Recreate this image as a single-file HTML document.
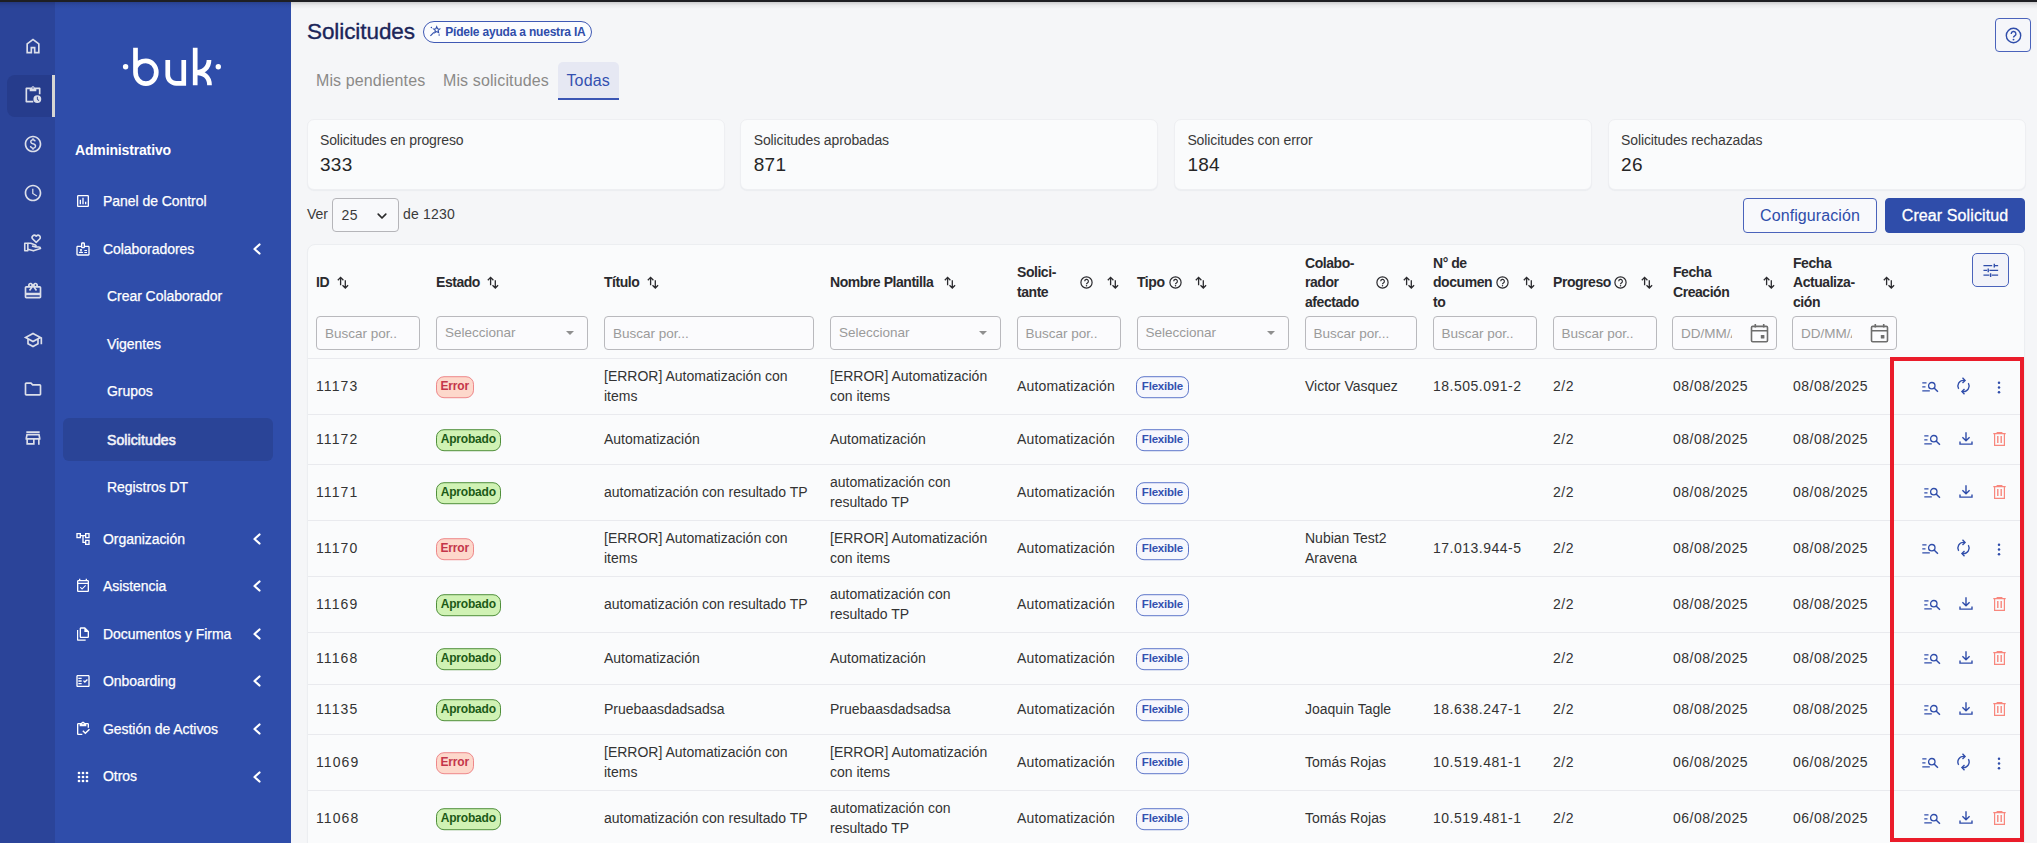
<!DOCTYPE html>
<html lang="es">
<head>
<meta charset="utf-8">
<title>Solicitudes</title>
<style>
*{box-sizing:border-box;margin:0;padding:0}
html,body{width:2037px;height:843px;overflow:hidden}
body{font-family:"Liberation Sans",sans-serif;background:#f5f6f8;color:#333;position:relative;font-size:14px}
.abs{position:absolute}
#topbar{position:absolute;left:0;top:0;width:2037px;height:1.800px;background:#1e1f23;z-index:50}
#topsh{position:absolute;left:0;top:1.800px;width:2037px;height:7px;background:linear-gradient(to bottom,rgba(0,0,0,0.17),rgba(0,0,0,0.05) 45%,rgba(0,0,0,0));z-index:49}
#rail{position:absolute;left:0;top:0;width:55px;height:843px;background:#2b4499}
#side{position:absolute;left:55px;top:0;width:236px;height:843px;background:#2f4daa}
#rail svg{position:absolute;fill:#dcdfea}
#rail .act{position:absolute;left:7px;top:75px;width:46px;height:41.500px;background:#263c8c;border-radius:8px 0 0 8px}
#rail .bar{position:absolute;left:52px;top:75px;width:3px;height:41.500px;background:#d6d6d4}
#side .t{position:absolute;color:#fff;font-size:14px;white-space:nowrap;line-height:18px;letter-spacing:-0.05px;-webkit-text-stroke:0.25px #fff}
#side .ch{position:absolute;left:197px;width:10px;height:12px}
#side svg.ic{position:absolute;fill:#fff}
#main{position:absolute;left:291px;top:0;width:1746px;height:843px}

#main .title{position:absolute;left:16px;top:17.5px;font-size:22.5px;line-height:28px;color:#1b2559;white-space:nowrap;letter-spacing:-0.08px;-webkit-text-stroke:0.35px #1b2559}
#main .pill{position:absolute;left:132px;top:20.8px;width:168.5px;height:22.2px;border:1px solid #3f59b4;border-radius:11.1px;background:#fbfcfe}
#main .pill span{position:absolute;left:21.2px;top:0.5px;line-height:20.2px;font-size:12px;font-weight:700;color:#2f4daa;white-space:nowrap;letter-spacing:-0.2px}
.tab{position:absolute;top:71.4px;font-size:16px;line-height:20px;color:#8b8a88;white-space:nowrap;letter-spacing:0.12px}
.tabact{position:absolute;left:267px;top:62px;width:60.500px;height:38.400px;background:#e6e8f3;border-radius:5px 5px 0 0;border-bottom:2px solid #3a55b4}
.card{position:absolute;top:119.2px;width:418.2px;height:70.6px;background:#fafbfc;border:1px solid #eeeff2;border-radius:7px;box-shadow:0 1px 1px rgba(30,40,70,0.045)}
.card .l{position:absolute;left:12.4px;top:11px;font-size:14px;line-height:18px;color:#3a3a3a;white-space:nowrap;letter-spacing:-0.12px}
.card .n{position:absolute;left:12.4px;top:32.8px;font-size:19px;line-height:24px;color:#262626;white-space:nowrap;letter-spacing:0.3px}
.btn{position:absolute;top:198px;height:34.600px;border-radius:4px;font-size:16px;line-height:34.200px;letter-spacing:0.1px;text-align:center;white-space:nowrap}
#tbl{position:absolute;left:16px;top:244.300px;width:1718px;height:620px;background:#fafbfc;border:1px solid #eceef1;border-radius:8px;box-shadow:0 1px 1px rgba(30,40,70,0.045)}
.h{position:absolute;font-weight:700;font-size:14px;line-height:19.700px;color:#2a2a2e;white-space:nowrap;letter-spacing:-0.45px}
.q{position:absolute;width:13px;height:13px}
.s{position:absolute;width:12px;height:13px}
.f{position:absolute;top:316px;height:34px;border:1px solid #b9b9bd;border-radius:4px;background:#fbfbfd;font-size:13.500px;line-height:33px;color:#9a9a9a;padding-left:8px;white-space:nowrap;overflow:hidden}
.f.sel{line-height:31.500px}
.f.sel:after{content:"";position:absolute;right:13px;top:14px;border-left:4.500px solid transparent;border-right:4.500px solid transparent;border-top:4.500px solid #8f8f8f}
.row{position:absolute;left:308px;width:1716px;border-top:1px solid #e9eaee}
.c{position:absolute;font-size:14px;line-height:19.800px;color:#333;white-space:nowrap;transform:translateY(-50%);margin-top:1.100px}
.num{letter-spacing:0.500px}
.bd{position:absolute;height:21.600px;margin-top:1.100px;border-radius:8px;font-size:12px;font-weight:700;line-height:19.600px;text-align:center;transform:translateY(-50%);white-space:nowrap;letter-spacing:-0.2px}
.err{left:436px;width:37.5px;background:#fdd8cb;border:1px solid #ee878a;color:#c4364a}
.apr{left:436px;width:64.500px;background:#d0f2b4;border:1px solid #4f8f3a;color:#1c5a17}
.flx{left:1136.200px;width:52.500px;background:#f6f7fd;border:1px solid #5c75c9;color:#3350b0;font-size:11.500px}
.ai{position:absolute}
</style>
</head>
<body>
<div id="rail">
  <div class="act"></div><div class="bar"></div>
  <svg class="ri" style="left:23.0px;top:36.4px" width="20" height="20" viewBox="0 0 24 24"><path d="M6 19h3v-6h6v6h3v-9l-6-4.5L6 10v9zm-2 2V9l8-6 8 6v12h-7v-6h-2v6H4z"/></svg>
  <svg class="ri" style="left:23.0px;top:85.4px" width="20" height="20" viewBox="0 0 24 24"><path d="M8 3H4c-.550 0-1 .45-1 1v16c0 .55.45 1 1 1h8.300v-2H5V5h3z M16 3h4c.55 0 1 .45 1 1v7h-2V5h-3z M8 3h2.100a2 2 0 0 1 3.800 0H16v4.500H8zM12 2.700a.8.8 0 1 0 0 1.600.8.8 0 0 0 0-1.600z M17.200 12.200a4.700 4.700 0 1 0 0 9.400 4.700 4.700 0 0 0 0-9.400zm-.55 1.900h1.100v2.600l1.700 1.500-.75.850-2.050-1.850z"/></svg>
  <svg class="ri" style="left:23.0px;top:134.4px" width="20" height="20" viewBox="0 0 24 24"><path d="M12 2C6.48 2 2 6.48 2 12s4.48 10 10 10 10-4.48 10-10S17.52 2 12 2zm0 18c-4.41 0-8-3.59-8-8s3.59-8 8-8 8 3.59 8 8-3.59 8-8 8zm.89-8.9c-1.78-.59-2.64-.96-2.64-1.9 0-1.02 1.11-1.39 1.81-1.39 1.31 0 1.79.99 1.9 1.34l1.58-.67c-.15-.44-.82-1.91-2.66-2.23V5h-1.75v1.26c-2.6.56-2.62 2.85-2.62 2.96 0 2.27 2.25 2.91 3.35 3.31 1.58.56 2.28 1.07 2.28 2.03 0 1.13-1.05 1.61-1.98 1.61-1.82 0-2.34-1.87-2.4-2.09l-1.66.67c.63 2.19 2.28 2.78 3.02 2.96V19h1.75v-1.24c.52-.09 3.02-.59 3.02-3.22.01-1.39-.6-2.61-3-3.44z"/></svg>
  <svg class="ri" style="left:23.0px;top:183.4px" width="20" height="20" viewBox="0 0 24 24"><path d="M11.99 2C6.47 2 2 6.48 2 12s4.47 10 9.99 10C17.52 22 22 17.52 22 12S17.52 2 11.99 2zM12 20c-4.42 0-8-3.58-8-8s3.58-8 8-8 8 3.58 8 8-3.58 8-8 8zm.5-13H11v6l5.25 3.15.75-1.23-4.5-2.67z"/></svg>
  <svg class="ri" style="left:23.0px;top:233.3px" width="20" height="20" viewBox="0 0 24 24"><g fill="none" stroke="#dcdfea" stroke-width="1.900" stroke-linejoin="round"><path d="M15.850 11.300L11.700 7.200a2.650 2.650 0 0 1 3.800-3.700l.35.400.35-.400a2.650 2.650 0 0 1 3.800 3.700z"/><path d="M2.100 12.300h3.700v8.900H2.100z"/><path d="M5.800 12.300h3.500l5.500 2.050c.75.300 1.050.9.850 1.500-.2.600-.85.900-1.500.7l-3.400-1"/><path d="M5.800 19.400l6.700 2 8.500-2.800c0-1.100-.8-1.850-2-1.850h-4"/></g></svg>
  <svg class="ri" style="left:23.0px;top:281.4px" width="20" height="20" viewBox="0 0 24 24"><path d="M20 6h-2.18c.11-.31.18-.65.18-1 0-1.66-1.34-3-3-3-1.05 0-1.96.54-2.5 1.35l-.5.67-.5-.68C10.960 2.540 10.050 2 9 2 7.340 2 6 3.340 6 5c0 .35.070.69.180 1H4c-1.110 0-1.990.89-1.990 2L2 19c0 1.110.89 2 2 2h16c1.110 0 2-.89 2-2V8c0-1.110-.89-2-2-2zm-5-2c.55 0 1 .45 1 1s-.45 1-1 1-1-.45-1-1 .45-1 1-1zM9 4c.55 0 1 .45 1 1s-.45 1-1 1-1-.45-1-1 .45-1 1-1zm11 15H4v-2h16v2zm0-5H4V8h5.080L7 10.830 8.620 12 11 8.760l1-1.360 1 1.360L15.380 12 17 10.830 14.920 8H20v6z"/></svg>
  <svg class="ri" style="left:23.0px;top:330.4px" width="20" height="20" viewBox="0 0 24 24"><path d="M12 3L1 9l4 2.180v6L12 21l7-3.820v-6l2-1.090V17h2V9L12 3zm6.820 6L12 12.720 5.180 9 12 5.280 18.820 9zM17 15.990l-5 2.730-5-2.730v-3.720L12 15l5-2.730v3.720z"/></svg>
  <svg class="ri" style="left:23.0px;top:379.4px" width="20" height="20" viewBox="0 0 24 24"><path d="M9.170 6l2 2H20v10H4V6h5.170M10 4H4c-1.100 0-1.990.9-1.990 2L2 18c0 1.100.9 2 2 2h16c1.100 0 2-.9 2-2V8c0-1.100-.9-2-2-2h-8l-2-2z"/></svg>
  <svg class="ri" style="left:23.0px;top:428.4px" width="20" height="20" viewBox="0 0 24 24"><path d="M18.360 9l.6 3H5.040l.6-3h12.720M20 4H4v2h16V4zm0 3H4l-1 5v2h1v6h10v-6h4v6h2v-6h1v-2l-1-5zM6 18v-4h6v4H6z"/></svg>
</div>
<div id="side">
  <svg class="abs" style="left:66px;top:46px" width="102" height="42" viewBox="0 0 102 42">
    <circle cx="4.600" cy="20.700" r="2.700" fill="#fff"/><circle cx="97.300" cy="20.700" r="2.700" fill="#fff"/>
    <g fill="none" stroke="#fff" stroke-width="4.700" stroke-linejoin="miter">
      <path d="M14.500 1.800V26.300A10.400 11.350 0 1 0 24.900 14.950C20 14.950 16.300 17.500 14.500 21.500"/>
      <path d="M46.750 14V29A8.350 8.350 0 0 0 55.100 37.350H62.750V14"/>
      <path d="M74.200 1.800V39.300M88 14C88 22 82 26.700 74.200 26.700C83 26.700 88.500 31 88.500 39.300"/>
    </g>
  </svg>
  <div class="t" style="left:20px;top:141.3px;font-weight:700;letter-spacing:-0.15px;-webkit-text-stroke:0">Administrativo</div>
  <svg class="ic" style="left:20.0px;top:193.0px" width="16" height="16" viewBox="0 0 24 24"><path d="M9 17H7v-7h2v7zm4 0h-2V7h2v10zm4 0h-2v-4h2v4zm2 2H5V5h14v14zm0-16H5c-1.100 0-2 .9-2 2v14c0 1.100.9 2 2 2h14c1.100 0 2-.9 2-2V5c0-1.100-.9-2-2-2z"/></svg><div class="t" style="left:48px;top:192.1px">Panel de Control</div>
  <svg class="ic" style="left:20.0px;top:241.0px" width="16" height="16" viewBox="0 0 24 24"><path d="M20 7h-5V4c0-1.100-.9-2-2-2h-2c-1.100 0-2 .9-2 2v3H4c-1.100 0-2 .9-2 2v11c0 1.100.9 2 2 2h16c1.100 0 2-.9 2-2V9c0-1.100-.9-2-2-2zm-9-3h2v5h-2V4zm9 16H4V9h5c0 1.100.9 2 2 2h2c1.100 0 2-.9 2-2h5v11z M14 13.500h4V15h-4z M14 16.500h4V18h-4z M9 15c.83 0 1.500-.67 1.500-1.500S9.830 12 9 12s-1.500.67-1.500 1.500S8.170 15 9 15zm3 2.250c0-.99-2-1.500-3-1.500s-3 .51-3 1.500V18h6v-.75z"/></svg><div class="t" style="left:48px;top:240.0px">Colaboradores</div><svg class="ch" style="top:243px" viewBox="0 0 10 12"><path d="M7.5 1.500L2.500 6l5 4.500" fill="none" stroke="#fff" stroke-width="2.200" stroke-linecap="round" stroke-linejoin="round"/></svg>
  <div class="t" style="left:52px;top:287.0px">Crear Colaborador</div>
  <div class="t" style="left:52px;top:335.1px">Vigentes</div>
  <div class="t" style="left:52px;top:382.1px">Grupos</div>
  <div class="abs" style="left:8px;top:418px;width:210px;height:43px;border-radius:6px;background:#2a4497"></div>
  <div class="t" style="left:52px;top:430.5px;letter-spacing:0.1px;color:#f1f2f8;-webkit-text-stroke:0.6px #f1f2f8">Solicitudes</div>
  <div class="t" style="left:52px;top:477.5px">Registros DT</div>
  <svg class="ic" style="left:20.0px;top:531.0px" width="16" height="16" viewBox="0 0 24 24"><path d="M22 11V3h-7v3H9V3H2v8h7V8h2v10h4v3h7v-8h-7v3h-2V8h2v3h7zM7 9H4V5h3v4zm10 6h3v4h-3v-4zm0-10h3v4h-3V5z"/></svg><div class="t" style="left:48px;top:530px">Organización</div><svg class="ch" style="top:533px" viewBox="0 0 10 12"><path d="M7.5 1.500L2.500 6l5 4.500" fill="none" stroke="#fff" stroke-width="2.200" stroke-linecap="round" stroke-linejoin="round"/></svg>
  <svg class="ic" style="left:20.0px;top:578.0px" width="16" height="16" viewBox="0 0 24 24"><path d="M19 3h-1V1h-2v2H8V1H6v2H5c-1.110 0-1.990.9-1.990 2L3 19c0 1.100.89 2 2 2h14c1.100 0 2-.9 2-2V5c0-1.100-.9-2-2-2zm0 16H5V9h14v10zM5 7V5h14v2H5zm5.560 10.460l5.930-5.930-1.060-1.060-4.870 4.870-2.110-2.110-1.060 1.060z"/></svg><div class="t" style="left:48px;top:577px">Asistencia</div><svg class="ch" style="top:580px" viewBox="0 0 10 12"><path d="M7.5 1.500L2.500 6l5 4.500" fill="none" stroke="#fff" stroke-width="2.200" stroke-linecap="round" stroke-linejoin="round"/></svg>
  <svg class="ic" style="left:20.0px;top:626.0px" width="16" height="16" viewBox="0 0 24 24"><path d="M3 6v14.500c0 .85.650 1.500 1.500 1.500H16v-1.800H4.800V6z M9 2c-1.100 0-2 .9-2 2v12c0 1.100.9 2 2 2h10c1.100 0 2-.9 2-2V8l-6-6zm0 2h5v5h5v7H9z"/></svg><div class="t" style="left:48px;top:625px">Documentos y Firma</div><svg class="ch" style="top:628px" viewBox="0 0 10 12"><path d="M7.5 1.500L2.500 6l5 4.500" fill="none" stroke="#fff" stroke-width="2.200" stroke-linecap="round" stroke-linejoin="round"/></svg>
  <svg class="ic" style="left:20.0px;top:673.0px" width="16" height="16" viewBox="0 0 24 24"><path d="M20 3H4c-1.100 0-2 .9-2 2v14c0 1.100.9 2 2 2h16c1.100 0 2-.9 2-2V5c0-1.100-.9-2-2-2zm0 16H4V5h16v14z M19.410 10.420L17.990 9l-3.170 3.170-1.410-1.420L12 12.160 14.820 15z M5 7h5v2H5z M5 11h5v2H5z M5 15h5v2H5z"/></svg><div class="t" style="left:48px;top:671.8px">Onboarding</div><svg class="ch" style="top:675px" viewBox="0 0 10 12"><path d="M7.5 1.500L2.500 6l5 4.500" fill="none" stroke="#fff" stroke-width="2.200" stroke-linecap="round" stroke-linejoin="round"/></svg>
  <svg class="ic" style="left:20.0px;top:721.0px" width="16" height="16" viewBox="0 0 24 24"><path d="M5 5h2v3h10V5h2v5h2V5c0-1.100-.9-2-2-2h-4.180C14.400 1.840 13.300 1 12 1s-2.400.84-2.820 2H5c-1.100 0-2 .9-2 2v14c0 1.100.9 2 2 2h6v-2H5V5zm7-2c.55 0 1 .45 1 1s-.45 1-1 1-1-.45-1-1 .45-1 1-1z M21 11.500l-5.510 5.520-3.010-3.020-1.480 1.500 4.490 4.500 7-7z"/></svg><div class="t" style="left:48px;top:720px">Gestión de Activos</div><svg class="ch" style="top:723px" viewBox="0 0 10 12"><path d="M7.5 1.500L2.500 6l5 4.500" fill="none" stroke="#fff" stroke-width="2.200" stroke-linecap="round" stroke-linejoin="round"/></svg>
  <svg class="abs" style="left:22px;top:771px" width="12" height="12" viewBox="0 0 12 12" fill="#fff"><circle cx="2" cy="2" r="1.350"/><circle cx="2" cy="6" r="1.350"/><circle cx="2" cy="10" r="1.350"/><circle cx="6" cy="2" r="1.350"/><circle cx="6" cy="6" r="1.350"/><circle cx="6" cy="10" r="1.350"/><circle cx="10" cy="2" r="1.350"/><circle cx="10" cy="6" r="1.350"/><circle cx="10" cy="10" r="1.350"/></svg><div class="t" style="left:48px;top:767.3px">Otros</div><svg class="ch" style="top:771px" viewBox="0 0 10 12"><path d="M7.5 1.500L2.500 6l5 4.500" fill="none" stroke="#fff" stroke-width="2.200" stroke-linecap="round" stroke-linejoin="round"/></svg>
</div>
<div id="main">
  <div class="title">Solicitudes</div>
  <div class="pill"><svg class="abs" style="left:6px;top:3.700px" width="13" height="13" viewBox="0 0 13 13"><g fill="none" stroke="#2f4daa" stroke-width="1.050" stroke-linejoin="miter"><path d="M.4 10.900L3.900 7.400" stroke-width="1.200"/><path d="M6.70 1.70L7.58 3.79L9.84 3.98L8.13 5.46L8.64 7.67L6.70 6.50L4.76 7.67L5.27 5.46L3.56 3.98L5.82 3.79z"/></g><circle cx="1.400" cy="2.600" r=".75" fill="#2f4daa"/><circle cx="9.100" cy="10.100" r=".75" fill="#2f4daa"/></svg><span>Pídele ayuda a nuestra IA</span></div>
  <div class="tabact"></div>
  <div class="tab" style="left:25px">Mis pendientes</div>
  <div class="tab" style="left:152px">Mis solicitudes</div>
  <div class="tab" style="left:275.5px;color:#3350b0">Todas</div>
  <div class="abs" style="left:1704px;top:18.300px;width:36px;height:34px;border:1px solid #4a63bb;border-radius:4px;background:#f5f6fa"><svg class="abs" style="left:9px;top:8px" width="17" height="17" viewBox="0 0 17 17"><circle cx="8.500" cy="8.500" r="7.200" fill="none" stroke="#2f4daa" stroke-width="1.400"/><path d="M6.200 6.900a2.350 2.350 0 1 1 3.500 2c-.8.500-1.200.9-1.200 1.700" fill="none" stroke="#2f4daa" stroke-width="1.400"/><circle cx="8.500" cy="12.600" r=".95" fill="#2f4daa"/></svg></div>
  <div class="card" style="left:15.6px"><div class="l">Solicitudes en progreso</div><div class="n">333</div></div>
  <div class="card" style="left:449.3px"><div class="l">Solicitudes aprobadas</div><div class="n">871</div></div>
  <div class="card" style="left:883.0px"><div class="l">Solicitudes con error</div><div class="n">184</div></div>
  <div class="card" style="left:1316.7px"><div class="l">Solicitudes rechazadas</div><div class="n">26</div></div>
  <div class="abs" style="left:16px;top:204px;font-size:14px;line-height:20px;color:#3a3a3a">Ver</div>
  <div class="abs" style="left:41px;top:198px;width:67px;height:34px;border:1px solid #b5b5b9;border-radius:4px;background:#f8f9fb"><span class="abs" style="left:8.500px;top:6px;font-size:14px;line-height:20px;color:#3a3a3a;letter-spacing:0.4px">25</span><svg class="abs" style="left:43px;top:12px" width="12" height="10" viewBox="0 0 12 10"><path d="M2.200 3.200l3.800 3.800 3.800-3.800" fill="none" stroke="#2a2a2a" stroke-width="1.700" stroke-linecap="round" stroke-linejoin="round"/></svg></div>
  <div class="abs" style="left:112px;top:204px;font-size:14px;line-height:20px;color:#3a3a3a;letter-spacing:0.2px;white-space:nowrap">de 1230</div>
  <div class="btn" style="left:1452px;width:134px;border:1px solid #4a63bb;color:#2f4daa;background:#f8f9fc">Configuración</div>
  <div class="btn" style="left:1594px;width:140px;border:1px solid #2f4daa;color:#fff;background:#2f4daa;-webkit-text-stroke:0.3px #fff">Crear Solicitud</div>
  <div id="tbl"></div>
</div>
<!--TC-->
<div id="tc" style="position:absolute;left:0;top:0;width:2037px;height:843px">
  <div class="h" style="left:316px;top:273.25px">ID</div>
  <svg class="s" style="left:336.5px;top:275.7px" viewBox="0 0 12 13"><path d="M3.600 9.200V1.600M.8 4.200L3.600 1.400l2.800 2.800M8.300 4.200v7.600M5.500 9.200l2.800 2.800 2.800-2.800" fill="none" stroke="#2a2a2e" stroke-width="1.300" stroke-linejoin="miter"/></svg>
  <div class="h" style="left:436px;top:273.25px">Estado</div>
  <svg class="s" style="left:486.5px;top:275.7px" viewBox="0 0 12 13"><path d="M3.600 9.200V1.600M.8 4.200L3.600 1.400l2.800 2.800M8.300 4.200v7.600M5.500 9.200l2.800 2.800 2.800-2.800" fill="none" stroke="#2a2a2e" stroke-width="1.300" stroke-linejoin="miter"/></svg>
  <div class="h" style="left:604px;top:273.25px">Título</div>
  <svg class="s" style="left:647px;top:275.7px" viewBox="0 0 12 13"><path d="M3.600 9.200V1.600M.8 4.200L3.600 1.400l2.800 2.800M8.300 4.200v7.600M5.500 9.200l2.800 2.800 2.800-2.800" fill="none" stroke="#2a2a2e" stroke-width="1.300" stroke-linejoin="miter"/></svg>
  <div class="h" style="left:830px;top:273.25px">Nombre Plantilla</div>
  <svg class="s" style="left:944px;top:275.7px" viewBox="0 0 12 13"><path d="M3.600 9.200V1.600M.8 4.200L3.600 1.400l2.800 2.800M8.300 4.200v7.600M5.500 9.200l2.800 2.800 2.800-2.800" fill="none" stroke="#2a2a2e" stroke-width="1.300" stroke-linejoin="miter"/></svg>
  <div class="h" style="left:1017px;top:263.4px">Solici-<br>tante</div>
  <svg class="q" style="left:1080.2px;top:276px" viewBox="0 0 13 13"><circle cx="6.500" cy="6.500" r="5.600" fill="none" stroke="#2a2a2e" stroke-width="1.200"/><path d="M4.700 5.300a1.850 1.850 0 1 1 2.700 1.600c-.6.350-.9.700-.9 1.300" fill="none" stroke="#2a2a2e" stroke-width="1.150"/><circle cx="6.500" cy="9.800" r=".75" fill="#2a2a2e"/></svg>
  <svg class="s" style="left:1106.8px;top:275.7px" viewBox="0 0 12 13"><path d="M3.600 9.200V1.600M.8 4.200L3.600 1.400l2.800 2.800M8.300 4.200v7.600M5.500 9.200l2.800 2.800 2.800-2.800" fill="none" stroke="#2a2a2e" stroke-width="1.300" stroke-linejoin="miter"/></svg>
  <div class="h" style="left:1137px;top:273.25px">Tipo</div>
  <svg class="q" style="left:1168.5px;top:276px" viewBox="0 0 13 13"><circle cx="6.500" cy="6.500" r="5.600" fill="none" stroke="#2a2a2e" stroke-width="1.200"/><path d="M4.700 5.300a1.850 1.850 0 1 1 2.700 1.600c-.6.350-.9.700-.9 1.300" fill="none" stroke="#2a2a2e" stroke-width="1.150"/><circle cx="6.500" cy="9.800" r=".75" fill="#2a2a2e"/></svg>
  <svg class="s" style="left:1195.2px;top:275.7px" viewBox="0 0 12 13"><path d="M3.600 9.200V1.600M.8 4.200L3.600 1.400l2.800 2.800M8.300 4.200v7.600M5.500 9.200l2.800 2.800 2.800-2.800" fill="none" stroke="#2a2a2e" stroke-width="1.300" stroke-linejoin="miter"/></svg>
  <div class="h" style="left:1305px;top:253.55px">Colabo-<br>rador<br>afectado</div>
  <svg class="q" style="left:1376.2px;top:276px" viewBox="0 0 13 13"><circle cx="6.500" cy="6.500" r="5.600" fill="none" stroke="#2a2a2e" stroke-width="1.200"/><path d="M4.700 5.300a1.850 1.850 0 1 1 2.700 1.600c-.6.350-.9.700-.9 1.300" fill="none" stroke="#2a2a2e" stroke-width="1.150"/><circle cx="6.500" cy="9.800" r=".75" fill="#2a2a2e"/></svg>
  <svg class="s" style="left:1403.2px;top:275.7px" viewBox="0 0 12 13"><path d="M3.600 9.200V1.600M.8 4.200L3.600 1.400l2.800 2.800M8.300 4.200v7.600M5.500 9.200l2.800 2.800 2.800-2.800" fill="none" stroke="#2a2a2e" stroke-width="1.300" stroke-linejoin="miter"/></svg>
  <div class="h" style="left:1433px;top:253.55px">N° de<br>documen<br>to</div>
  <svg class="q" style="left:1496.4px;top:276px" viewBox="0 0 13 13"><circle cx="6.500" cy="6.500" r="5.600" fill="none" stroke="#2a2a2e" stroke-width="1.200"/><path d="M4.700 5.300a1.850 1.850 0 1 1 2.700 1.600c-.6.350-.9.700-.9 1.300" fill="none" stroke="#2a2a2e" stroke-width="1.150"/><circle cx="6.500" cy="9.800" r=".75" fill="#2a2a2e"/></svg>
  <svg class="s" style="left:1523.3px;top:275.7px" viewBox="0 0 12 13"><path d="M3.600 9.200V1.600M.8 4.200L3.600 1.400l2.800 2.800M8.300 4.200v7.600M5.500 9.200l2.800 2.800 2.800-2.800" fill="none" stroke="#2a2a2e" stroke-width="1.300" stroke-linejoin="miter"/></svg>
  <div class="h" style="left:1553px;top:273.25px">Progreso</div>
  <svg class="q" style="left:1614.3px;top:276px" viewBox="0 0 13 13"><circle cx="6.500" cy="6.500" r="5.600" fill="none" stroke="#2a2a2e" stroke-width="1.200"/><path d="M4.700 5.300a1.850 1.850 0 1 1 2.700 1.600c-.6.350-.9.700-.9 1.300" fill="none" stroke="#2a2a2e" stroke-width="1.150"/><circle cx="6.500" cy="9.800" r=".75" fill="#2a2a2e"/></svg>
  <svg class="s" style="left:1641.4px;top:275.7px" viewBox="0 0 12 13"><path d="M3.600 9.200V1.600M.8 4.200L3.600 1.400l2.800 2.800M8.300 4.200v7.600M5.500 9.200l2.800 2.800 2.800-2.800" fill="none" stroke="#2a2a2e" stroke-width="1.300" stroke-linejoin="miter"/></svg>
  <div class="h" style="left:1673px;top:263.4px">Fecha<br>Creación</div>
  <svg class="s" style="left:1763.2px;top:275.7px" viewBox="0 0 12 13"><path d="M3.600 9.200V1.600M.8 4.200L3.600 1.400l2.800 2.800M8.300 4.200v7.600M5.500 9.200l2.800 2.800 2.800-2.800" fill="none" stroke="#2a2a2e" stroke-width="1.300" stroke-linejoin="miter"/></svg>
  <div class="h" style="left:1793px;top:253.55px">Fecha<br>Actualiza-<br>ción</div>
  <svg class="s" style="left:1883px;top:275.7px" viewBox="0 0 12 13"><path d="M3.600 9.200V1.600M.8 4.200L3.600 1.400l2.800 2.800M8.300 4.200v7.600M5.500 9.200l2.800 2.800 2.800-2.800" fill="none" stroke="#2a2a2e" stroke-width="1.300" stroke-linejoin="miter"/></svg>
  <div class="abs" style="left:1972px;top:253px;width:37px;height:34px;border:1px solid #4a63bb;border-radius:5px;background:#f2f3f9"><svg class="abs" style="left:10px;top:8.7px" width="15.6" height="14.7" viewBox="0 0 17 16"><g fill="none" stroke="#2f4daa" stroke-width="1.300"><path d="M.5 2.800h9.500M12.500 2.800h4M.5 8h4M7 8h9.500M.5 13.200h6.500M9.500 13.200h7"/><path d="M12.300 .8v4M5.700 6v4M8.300 11.200v4" stroke-width="1.500"/></g></svg></div>
  <div class="f" style="left:316px;width:104px">Buscar por..</div>
  <div class="f sel" style="left:436px;width:152px">Seleccionar</div>
  <div class="f" style="left:604px;width:210px">Buscar por...</div>
  <div class="f sel" style="left:830px;width:170.5px">Seleccionar</div>
  <div class="f" style="left:1016.5px;width:104px">Buscar por..</div>
  <div class="f sel" style="left:1136.5px;width:152px">Seleccionar</div>
  <div class="f" style="left:1304.5px;width:112px">Buscar por...</div>
  <div class="f" style="left:1432.5px;width:104px">Buscar por..</div>
  <div class="f" style="left:1552.5px;width:104px">Buscar por..</div>
  <div class="f" style="left:1672px;width:105px"><span style="display:inline-block;width:51px;overflow:hidden;vertical-align:top">DD/MM/AAAA</span><svg class="abs" style="left:76.6px;top:6.4px" width="19" height="20.4" viewBox="0 0 19 20"><g fill="none" stroke="#6d6d6d" stroke-width="1.600"><rect x="1.500" y="3.200" width="16" height="15.300" rx="1.200"/><path d="M1.500 7.600h16M5.300 .8v3.400M13.700 .8v3.400"/></g><rect x="10.800" y="11.800" width="3.600" height="3.600" rx=".6" fill="#6d6d6d"/></svg></div>
  <div class="f" style="left:1792px;width:105px"><span style="display:inline-block;width:51px;overflow:hidden;vertical-align:top">DD/MM/AAAA</span><svg class="abs" style="left:76.6px;top:6.4px" width="19" height="20.4" viewBox="0 0 19 20"><g fill="none" stroke="#6d6d6d" stroke-width="1.600"><rect x="1.500" y="3.200" width="16" height="15.300" rx="1.200"/><path d="M1.500 7.600h16M5.300 .8v3.400M13.700 .8v3.400"/></g><rect x="10.800" y="11.800" width="3.600" height="3.600" rx=".6" fill="#6d6d6d"/></svg></div>
  <div class="row" style="top:358px;height:56px"></div>
  <div class="c" style="left:316px;top:386.0px;letter-spacing:1.100px">11173</div>
  <div class="bd err" style="top:386.0px">Error</div>
  <div class="c" style="left:604px;top:386.0px">[ERROR] Automatización con<br>items</div>
  <div class="c" style="left:830px;top:386.0px">[ERROR] Automatización<br>con items</div>
  <div class="c" style="left:1017px;top:386.0px;letter-spacing:0.15px">Automatización</div>
  <div class="bd flx" style="top:386.0px">Flexible</div>
  <div class="c" style="left:1305px;top:386.0px">Victor Vasquez</div>
  <div class="c num" style="left:1433px;top:386.0px">18.505.091-2</div>
  <div class="c num" style="left:1553px;top:386.0px">2/2</div>
  <div class="c num" style="left:1673px;top:386.0px">08/08/2025</div>
  <div class="c num" style="left:1793px;top:386.0px">08/08/2025</div>
  <svg class="ai" style="left:1921.5px;top:380.8px" width="17" height="12" viewBox="0 0 17 12"><g fill="none" stroke="#2f4daa" stroke-width="1.300"><path d="M.3 1.800h4.200M.3 5.800h3.200M.3 9.900h7.500"/><circle cx="9.800" cy="4.700" r="3.200"/><path d="M12.100 7l3.800 3.800" stroke-width="1.500"/></g></svg>
  <svg class="ai" style="left:1956px;top:376.7px" width="15" height="18" viewBox="0 0 15 18"><g fill="none" stroke="#2f4daa" stroke-width="1.350" stroke-linejoin="miter"><path d="M2.650 11.800A5.600 5.600 0 0 1 7.500 3.400H9M12.350 6.200A5.600 5.600 0 0 1 7.500 14.600H6"/><path d="M6.500 .8L9.100 3.400 6.500 6M8.500 12L5.900 14.600 8.500 17.200"/></g></svg>
  <svg class="ai" style="left:1996.5px;top:380.9px" width="4" height="13" viewBox="0 0 4 13" fill="#2f4daa"><circle cx="2" cy="1.700" r="1.250"/><circle cx="2" cy="6.500" r="1.250"/><circle cx="2" cy="11.300" r="1.250"/></svg>
  <div class="row" style="top:414px;height:50px"></div>
  <div class="c" style="left:316px;top:439.0px;letter-spacing:1.100px">11172</div>
  <div class="bd apr" style="top:439.0px">Aprobado</div>
  <div class="c" style="left:604px;top:439.0px">Automatización</div>
  <div class="c" style="left:830px;top:439.0px">Automatización</div>
  <div class="c" style="left:1017px;top:439.0px;letter-spacing:0.15px">Automatización</div>
  <div class="bd flx" style="top:439.0px">Flexible</div>
  <div class="c num" style="left:1553px;top:439.0px">2/2</div>
  <div class="c num" style="left:1673px;top:439.0px">08/08/2025</div>
  <div class="c num" style="left:1793px;top:439.0px">08/08/2025</div>
  <svg class="ai" style="left:1923.5px;top:433.8px" width="17" height="12" viewBox="0 0 17 12"><g fill="none" stroke="#2f4daa" stroke-width="1.300"><path d="M.3 1.800h4.200M.3 5.800h3.200M.3 9.900h7.500"/><circle cx="9.800" cy="4.700" r="3.200"/><path d="M12.100 7l3.800 3.800" stroke-width="1.500"/></g></svg>
  <svg class="ai" style="left:1959px;top:432.4px" width="14" height="13" viewBox="0 0 14 13"><g fill="none" stroke="#2f4daa" stroke-width="1.400"><path d="M7 .3v8.200M3.400 5.200L7 8.800l3.600-3.600" stroke-linejoin="round"/><path d="M1 9.500v2.600h12V9.500"/></g></svg>
  <svg class="ai" style="left:1993px;top:431.9px" width="13" height="14" viewBox="0 0 13 14"><g fill="none" stroke="#f8877d" stroke-width="1.200"><path d="M.3 1.600h12.400M4.200 1.400V.5h4.600v.9"/><path d="M1.600 1.800v11.500h9.800V1.800"/><path d="M4.800 4v7M8.200 4v7" stroke-width="1.400"/></g></svg>
  <div class="row" style="top:464px;height:56px"></div>
  <div class="c" style="left:316px;top:492.0px;letter-spacing:1.100px">11171</div>
  <div class="bd apr" style="top:492.0px">Aprobado</div>
  <div class="c" style="left:604px;top:492.0px">automatización con resultado TP</div>
  <div class="c" style="left:830px;top:492.0px">automatización con<br>resultado TP</div>
  <div class="c" style="left:1017px;top:492.0px;letter-spacing:0.15px">Automatización</div>
  <div class="bd flx" style="top:492.0px">Flexible</div>
  <div class="c num" style="left:1553px;top:492.0px">2/2</div>
  <div class="c num" style="left:1673px;top:492.0px">08/08/2025</div>
  <div class="c num" style="left:1793px;top:492.0px">08/08/2025</div>
  <svg class="ai" style="left:1923.5px;top:486.8px" width="17" height="12" viewBox="0 0 17 12"><g fill="none" stroke="#2f4daa" stroke-width="1.300"><path d="M.3 1.800h4.200M.3 5.800h3.200M.3 9.900h7.500"/><circle cx="9.800" cy="4.700" r="3.200"/><path d="M12.100 7l3.800 3.800" stroke-width="1.500"/></g></svg>
  <svg class="ai" style="left:1959px;top:485.4px" width="14" height="13" viewBox="0 0 14 13"><g fill="none" stroke="#2f4daa" stroke-width="1.400"><path d="M7 .3v8.200M3.400 5.200L7 8.800l3.600-3.600" stroke-linejoin="round"/><path d="M1 9.500v2.600h12V9.500"/></g></svg>
  <svg class="ai" style="left:1993px;top:484.9px" width="13" height="14" viewBox="0 0 13 14"><g fill="none" stroke="#f8877d" stroke-width="1.200"><path d="M.3 1.600h12.400M4.200 1.400V.5h4.600v.9"/><path d="M1.600 1.800v11.500h9.800V1.800"/><path d="M4.800 4v7M8.200 4v7" stroke-width="1.400"/></g></svg>
  <div class="row" style="top:520px;height:56px"></div>
  <div class="c" style="left:316px;top:548.0px;letter-spacing:1.100px">11170</div>
  <div class="bd err" style="top:548.0px">Error</div>
  <div class="c" style="left:604px;top:548.0px">[ERROR] Automatización con<br>items</div>
  <div class="c" style="left:830px;top:548.0px">[ERROR] Automatización<br>con items</div>
  <div class="c" style="left:1017px;top:548.0px;letter-spacing:0.15px">Automatización</div>
  <div class="bd flx" style="top:548.0px">Flexible</div>
  <div class="c" style="left:1305px;top:548.0px">Nubian Test2<br>Aravena</div>
  <div class="c num" style="left:1433px;top:548.0px">17.013.944-5</div>
  <div class="c num" style="left:1553px;top:548.0px">2/2</div>
  <div class="c num" style="left:1673px;top:548.0px">08/08/2025</div>
  <div class="c num" style="left:1793px;top:548.0px">08/08/2025</div>
  <svg class="ai" style="left:1921.5px;top:542.8px" width="17" height="12" viewBox="0 0 17 12"><g fill="none" stroke="#2f4daa" stroke-width="1.300"><path d="M.3 1.800h4.200M.3 5.800h3.200M.3 9.900h7.500"/><circle cx="9.800" cy="4.700" r="3.200"/><path d="M12.100 7l3.800 3.800" stroke-width="1.500"/></g></svg>
  <svg class="ai" style="left:1956px;top:538.7px" width="15" height="18" viewBox="0 0 15 18"><g fill="none" stroke="#2f4daa" stroke-width="1.350" stroke-linejoin="miter"><path d="M2.650 11.800A5.600 5.600 0 0 1 7.500 3.400H9M12.350 6.200A5.600 5.600 0 0 1 7.500 14.600H6"/><path d="M6.500 .8L9.100 3.400 6.500 6M8.500 12L5.900 14.600 8.500 17.200"/></g></svg>
  <svg class="ai" style="left:1996.5px;top:542.9px" width="4" height="13" viewBox="0 0 4 13" fill="#2f4daa"><circle cx="2" cy="1.700" r="1.250"/><circle cx="2" cy="6.500" r="1.250"/><circle cx="2" cy="11.300" r="1.250"/></svg>
  <div class="row" style="top:576px;height:56px"></div>
  <div class="c" style="left:316px;top:604.0px;letter-spacing:1.100px">11169</div>
  <div class="bd apr" style="top:604.0px">Aprobado</div>
  <div class="c" style="left:604px;top:604.0px">automatización con resultado TP</div>
  <div class="c" style="left:830px;top:604.0px">automatización con<br>resultado TP</div>
  <div class="c" style="left:1017px;top:604.0px;letter-spacing:0.15px">Automatización</div>
  <div class="bd flx" style="top:604.0px">Flexible</div>
  <div class="c num" style="left:1553px;top:604.0px">2/2</div>
  <div class="c num" style="left:1673px;top:604.0px">08/08/2025</div>
  <div class="c num" style="left:1793px;top:604.0px">08/08/2025</div>
  <svg class="ai" style="left:1923.5px;top:598.8px" width="17" height="12" viewBox="0 0 17 12"><g fill="none" stroke="#2f4daa" stroke-width="1.300"><path d="M.3 1.800h4.200M.3 5.800h3.200M.3 9.900h7.500"/><circle cx="9.800" cy="4.700" r="3.200"/><path d="M12.100 7l3.800 3.800" stroke-width="1.500"/></g></svg>
  <svg class="ai" style="left:1959px;top:597.4px" width="14" height="13" viewBox="0 0 14 13"><g fill="none" stroke="#2f4daa" stroke-width="1.400"><path d="M7 .3v8.200M3.400 5.200L7 8.800l3.600-3.600" stroke-linejoin="round"/><path d="M1 9.500v2.600h12V9.500"/></g></svg>
  <svg class="ai" style="left:1993px;top:596.9px" width="13" height="14" viewBox="0 0 13 14"><g fill="none" stroke="#f8877d" stroke-width="1.200"><path d="M.3 1.600h12.400M4.200 1.400V.5h4.600v.9"/><path d="M1.600 1.800v11.500h9.800V1.800"/><path d="M4.800 4v7M8.200 4v7" stroke-width="1.400"/></g></svg>
  <div class="row" style="top:632px;height:52px"></div>
  <div class="c" style="left:316px;top:658.0px;letter-spacing:1.100px">11168</div>
  <div class="bd apr" style="top:658.0px">Aprobado</div>
  <div class="c" style="left:604px;top:658.0px">Automatización</div>
  <div class="c" style="left:830px;top:658.0px">Automatización</div>
  <div class="c" style="left:1017px;top:658.0px;letter-spacing:0.15px">Automatización</div>
  <div class="bd flx" style="top:658.0px">Flexible</div>
  <div class="c num" style="left:1553px;top:658.0px">2/2</div>
  <div class="c num" style="left:1673px;top:658.0px">08/08/2025</div>
  <div class="c num" style="left:1793px;top:658.0px">08/08/2025</div>
  <svg class="ai" style="left:1923.5px;top:652.8px" width="17" height="12" viewBox="0 0 17 12"><g fill="none" stroke="#2f4daa" stroke-width="1.300"><path d="M.3 1.800h4.200M.3 5.800h3.200M.3 9.900h7.500"/><circle cx="9.800" cy="4.700" r="3.200"/><path d="M12.100 7l3.800 3.800" stroke-width="1.500"/></g></svg>
  <svg class="ai" style="left:1959px;top:651.4px" width="14" height="13" viewBox="0 0 14 13"><g fill="none" stroke="#2f4daa" stroke-width="1.400"><path d="M7 .3v8.200M3.400 5.200L7 8.800l3.600-3.600" stroke-linejoin="round"/><path d="M1 9.500v2.600h12V9.500"/></g></svg>
  <svg class="ai" style="left:1993px;top:650.9px" width="13" height="14" viewBox="0 0 13 14"><g fill="none" stroke="#f8877d" stroke-width="1.200"><path d="M.3 1.600h12.400M4.200 1.400V.5h4.600v.9"/><path d="M1.600 1.800v11.500h9.800V1.800"/><path d="M4.800 4v7M8.200 4v7" stroke-width="1.400"/></g></svg>
  <div class="row" style="top:684px;height:50px"></div>
  <div class="c" style="left:316px;top:709.0px;letter-spacing:1.100px">11135</div>
  <div class="bd apr" style="top:709.0px">Aprobado</div>
  <div class="c" style="left:604px;top:709.0px">Pruebaasdadsadsa</div>
  <div class="c" style="left:830px;top:709.0px">Pruebaasdadsadsa</div>
  <div class="c" style="left:1017px;top:709.0px;letter-spacing:0.15px">Automatización</div>
  <div class="bd flx" style="top:709.0px">Flexible</div>
  <div class="c" style="left:1305px;top:709.0px">Joaquin Tagle</div>
  <div class="c num" style="left:1433px;top:709.0px">18.638.247-1</div>
  <div class="c num" style="left:1553px;top:709.0px">2/2</div>
  <div class="c num" style="left:1673px;top:709.0px">08/08/2025</div>
  <div class="c num" style="left:1793px;top:709.0px">08/08/2025</div>
  <svg class="ai" style="left:1923.5px;top:703.8px" width="17" height="12" viewBox="0 0 17 12"><g fill="none" stroke="#2f4daa" stroke-width="1.300"><path d="M.3 1.800h4.200M.3 5.800h3.200M.3 9.900h7.500"/><circle cx="9.800" cy="4.700" r="3.200"/><path d="M12.100 7l3.800 3.800" stroke-width="1.500"/></g></svg>
  <svg class="ai" style="left:1959px;top:702.4px" width="14" height="13" viewBox="0 0 14 13"><g fill="none" stroke="#2f4daa" stroke-width="1.400"><path d="M7 .3v8.200M3.400 5.200L7 8.800l3.600-3.600" stroke-linejoin="round"/><path d="M1 9.500v2.600h12V9.500"/></g></svg>
  <svg class="ai" style="left:1993px;top:701.9px" width="13" height="14" viewBox="0 0 13 14"><g fill="none" stroke="#f8877d" stroke-width="1.200"><path d="M.3 1.600h12.400M4.200 1.400V.5h4.600v.9"/><path d="M1.600 1.800v11.500h9.800V1.800"/><path d="M4.800 4v7M8.200 4v7" stroke-width="1.400"/></g></svg>
  <div class="row" style="top:734px;height:56px"></div>
  <div class="c" style="left:316px;top:762.0px;letter-spacing:1.100px">11069</div>
  <div class="bd err" style="top:762.0px">Error</div>
  <div class="c" style="left:604px;top:762.0px">[ERROR] Automatización con<br>items</div>
  <div class="c" style="left:830px;top:762.0px">[ERROR] Automatización<br>con items</div>
  <div class="c" style="left:1017px;top:762.0px;letter-spacing:0.15px">Automatización</div>
  <div class="bd flx" style="top:762.0px">Flexible</div>
  <div class="c" style="left:1305px;top:762.0px">Tomás Rojas</div>
  <div class="c num" style="left:1433px;top:762.0px">10.519.481-1</div>
  <div class="c num" style="left:1553px;top:762.0px">2/2</div>
  <div class="c num" style="left:1673px;top:762.0px">06/08/2025</div>
  <div class="c num" style="left:1793px;top:762.0px">06/08/2025</div>
  <svg class="ai" style="left:1921.5px;top:756.8px" width="17" height="12" viewBox="0 0 17 12"><g fill="none" stroke="#2f4daa" stroke-width="1.300"><path d="M.3 1.800h4.200M.3 5.800h3.200M.3 9.900h7.500"/><circle cx="9.800" cy="4.700" r="3.200"/><path d="M12.100 7l3.800 3.800" stroke-width="1.500"/></g></svg>
  <svg class="ai" style="left:1956px;top:752.7px" width="15" height="18" viewBox="0 0 15 18"><g fill="none" stroke="#2f4daa" stroke-width="1.350" stroke-linejoin="miter"><path d="M2.650 11.800A5.600 5.600 0 0 1 7.500 3.400H9M12.350 6.200A5.600 5.600 0 0 1 7.500 14.600H6"/><path d="M6.500 .8L9.100 3.400 6.500 6M8.500 12L5.900 14.600 8.500 17.200"/></g></svg>
  <svg class="ai" style="left:1996.5px;top:756.9px" width="4" height="13" viewBox="0 0 4 13" fill="#2f4daa"><circle cx="2" cy="1.700" r="1.250"/><circle cx="2" cy="6.500" r="1.250"/><circle cx="2" cy="11.300" r="1.250"/></svg>
  <div class="row" style="top:790px;height:56px"></div>
  <div class="c" style="left:316px;top:818.0px;letter-spacing:1.100px">11068</div>
  <div class="bd apr" style="top:818.0px">Aprobado</div>
  <div class="c" style="left:604px;top:818.0px">automatización con resultado TP</div>
  <div class="c" style="left:830px;top:818.0px">automatización con<br>resultado TP</div>
  <div class="c" style="left:1017px;top:818.0px;letter-spacing:0.15px">Automatización</div>
  <div class="bd flx" style="top:818.0px">Flexible</div>
  <div class="c" style="left:1305px;top:818.0px">Tomás Rojas</div>
  <div class="c num" style="left:1433px;top:818.0px">10.519.481-1</div>
  <div class="c num" style="left:1553px;top:818.0px">2/2</div>
  <div class="c num" style="left:1673px;top:818.0px">06/08/2025</div>
  <div class="c num" style="left:1793px;top:818.0px">06/08/2025</div>
  <svg class="ai" style="left:1923.5px;top:812.8px" width="17" height="12" viewBox="0 0 17 12"><g fill="none" stroke="#2f4daa" stroke-width="1.300"><path d="M.3 1.800h4.200M.3 5.800h3.200M.3 9.900h7.500"/><circle cx="9.800" cy="4.700" r="3.200"/><path d="M12.100 7l3.800 3.800" stroke-width="1.500"/></g></svg>
  <svg class="ai" style="left:1959px;top:811.4px" width="14" height="13" viewBox="0 0 14 13"><g fill="none" stroke="#2f4daa" stroke-width="1.400"><path d="M7 .3v8.200M3.400 5.200L7 8.800l3.600-3.600" stroke-linejoin="round"/><path d="M1 9.500v2.600h12V9.500"/></g></svg>
  <svg class="ai" style="left:1993px;top:810.9px" width="13" height="14" viewBox="0 0 13 14"><g fill="none" stroke="#f8877d" stroke-width="1.200"><path d="M.3 1.600h12.400M4.200 1.400V.5h4.600v.9"/><path d="M1.600 1.800v11.500h9.800V1.800"/><path d="M4.800 4v7M8.200 4v7" stroke-width="1.400"/></g></svg>
  <div class="abs" style="left:1890px;top:357px;width:133.800px;height:484.700px;border:4px solid #ea1c2a"></div>
</div>
<div id="topbar"></div>
<div id="topsh"></div>
</body>
</html>
